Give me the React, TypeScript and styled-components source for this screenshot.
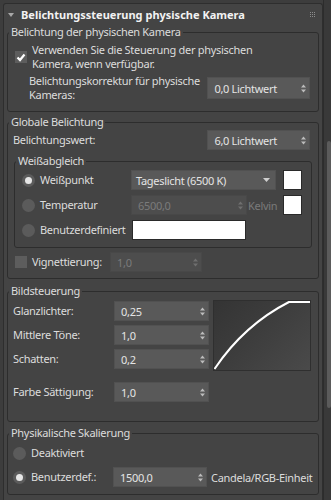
import React from "react";
import styled, { createGlobalStyle } from "styled-components";

const GlobalStyle = createGlobalStyle`
  html, body {
    margin: 0;
    padding: 0;
    background: #3d3d3d;
  }
  body {
    font-family: "Noto Sans", "Open Sans", sans-serif;
    font-size: 11px;
    letter-spacing: -0.3px;
    color: #dcdcdc;
  }
`;

const Window = styled.div`
  display: flex;
  width: 331px;
  height: 500px;
  overflow: hidden;
  background: #3d3d3d;
`;

const Panel = styled.div`
  box-sizing: border-box;
  flex: 0 0 319px;
  height: 497px;
  margin: 3px 0 0 3px;
  padding: 0 3px;
  display: flex;
  flex-direction: column;
  background: #444444;
  border: 1px solid #2e2e2e;
  border-bottom: none;
  border-radius: 3px 3px 0 0;
`;

const Header = styled.div`
  display: flex;
  align-items: center;
  height: 21px;
  padding-right: 4px;
`;

const Title = styled.div`
  flex: 1;
  font-weight: 700;
  letter-spacing: 0;
  color: #f2f2f2;
`;

const Scroll = styled.div`
  flex: 0 0 9px;
  height: 500px;
  background: #393939;
  border-left: 1px solid #2c2c2c;
  box-sizing: border-box;
`;

const Thumb = styled.div`
  width: 4px;
  margin-left: 3px;
  border-radius: 2px;
  background: #5b5b5b;
`;

const Group = styled.fieldset<{ $mt?: number; $inner?: boolean }>`
  margin: ${(p) => (p.$inner ? "4px -2px 0 1px" : `${p.$mt ?? 0}px 0 0 0`)};
  padding: 0;
  min-width: 0;
  border: 1px solid #2d2d2d;
  border-radius: 3px;
`;

const Legend = styled.legend`
  margin-left: 1px;
  padding: 0 2px;
  line-height: 14px;
  color: #dcdcdc;
`;

const Body = styled.div<{ $pad: string }>`
  display: flex;
  flex-direction: column;
  padding: ${(p) => p.$pad};
`;

const Row = styled.div<{ $h?: number; $mt?: number; $pl?: number }>`
  display: flex;
  align-items: center;
  height: ${(p) => (p.$h ? `${p.$h}px` : "auto")};
  margin-top: ${(p) => p.$mt ?? 0}px;
  padding-left: ${(p) => p.$pl ?? 0}px;
`;

const Label = styled.span<{ $w?: number; $lh?: number; $dim?: boolean }>`
  flex: ${(p) => (p.$w ? `0 0 ${p.$w}px` : "1")};
  line-height: ${(p) => p.$lh ?? 14}px;
  color: ${(p) => (p.$dim ? "#7a7a7a" : "#dcdcdc")};
  white-space: nowrap;
`;

const Field = styled.div<{ $w: number; $h?: number; $off?: boolean; $pl?: number }>`
  box-sizing: border-box;
  flex: 0 0 ${(p) => p.$w}px;
  height: ${(p) => p.$h ?? 20}px;
  display: flex;
  align-items: center;
  justify-content: space-between;
  padding: 0 3px 0 ${(p) => p.$pl ?? 6}px;
  background: ${(p) => (p.$off ? "#4d4d4d" : "#595959")};
  color: ${(p) => (p.$off ? "#7b7b7b" : "#e4e4e4")};
  border: 1px solid ${(p) => (p.$off ? "#484848" : "#515151")};
`;

const CheckBox = styled.span`
  flex: 0 0 12px;
  height: 12px;
  display: flex;
  align-items: center;
  justify-content: center;
  background: #5d5d5d;
  margin-right: 5px;
`;

const Radio = styled.span<{ $on?: boolean }>`
  flex: 0 0 13px;
  height: 13px;
  margin-right: 5px;
  border-radius: 50%;
  background: #5b5b5b;
  display: flex;
  align-items: center;
  justify-content: center;

  &::after {
    content: "";
    display: ${(p) => (p.$on ? "block" : "none")};
    width: 7px;
    height: 7px;
    border-radius: 50%;
    background: #e6e6e6;
  }
`;

const Swatch = styled.span`
  box-sizing: border-box;
  flex: 0 0 19px;
  height: 20px;
  margin-left: auto;
  background: #ffffff;
  border: 1px solid #2a2a2a;
`;

const ColorBox = styled.span`
  box-sizing: border-box;
  flex: 0 0 114px;
  height: 20px;
  margin-left: 1px;
  background: #ffffff;
  border: 1px solid #2a2a2a;
`;

const Unit = styled.span<{ $dim?: boolean }>`
  margin-left: ${(p) => (p.$dim ? 1 : 4)}px;
  color: ${(p) => (p.$dim ? "#7a7a7a" : "#dcdcdc")};
  white-space: nowrap;
`;

const Split = styled.div`
  display: flex;
  align-items: flex-start;
  margin-top: 1px;
`;

const Stack = styled.div`
  flex: 1;
  display: flex;
  flex-direction: column;
  gap: 4px;
  margin-top: 1px;
`;

const Curve = styled.div`
  box-sizing: border-box;
  flex: 0 0 98px;
  height: 71px;
  margin-left: 4px;
  border: 1px solid #2f2f2f;
  background: linear-gradient(135deg, #343434 0%, #3d3d3d 45%, #4a4a4a 100%);
`;

const Arrows = ({ off }: { off?: boolean }) => (
  <svg width="5" height="9" viewBox="0 0 5 9">
    <path d="M0 3.5L2.5 0.5L5 3.5Z M0 5.5L2.5 8.5L5 5.5Z" fill={off ? "#6f6f6f" : "#bcbcbc"} />
  </svg>
);

const Spinner = ({ value, w, h, off }: { value: string; w: number; h?: number; off?: boolean }) => (
  <Field $w={w} $h={h} $off={off}>
    <span>{value}</span>
    <Arrows off={off} />
  </Field>
);

const Check = ({ checked }: { checked?: boolean }) => (
  <CheckBox>
    {checked && (
      <svg width="10" height="9" viewBox="0 0 10 9">
        <path d="M1.5 4.5L4 7L8.5 1.5" stroke="#ffffff" strokeWidth="2.2" fill="none" />
      </svg>
    )}
  </CheckBox>
);

export default function App() {
  return (
    <>
      <GlobalStyle />
      <Window>
        <Panel>
          <Header>
            <svg width="6" height="4" viewBox="0 0 6 4" style={{ margin: "0 7px 0 1px" }}>
              <path d="M0 0H6L3 4Z" fill="#a8a8a8" />
            </svg>
            <Title>Belichtungssteuerung physische Kamera</Title>
            <svg width="5" height="5" viewBox="0 0 5 5">
              {[0, 2, 4].map((x) =>
                [0, 2, 4].map((y) => <rect key={`${x}-${y}`} x={x} y={y} width="1" height="1" fill="#8c8c8c" />)
              )}
            </svg>
          </Header>

          <Group>
            <Legend>Belichtung der physischen Kamera</Legend>
            <Body $pad="4px 8px 9px 5px">
              <Row $pl={2}>
                <Check checked />
                <Label $lh={14}>
                  Verwenden Sie die Steuerung der physischen
                  <br />
                  Kamera, wenn verfügbar.
                </Label>
              </Row>
              <Row $mt={3} $pl={16}>
                <Label $lh={14}>
                  Belichtungskorrektur für physische
                  <br />
                  Kameras:
                </Label>
                <Spinner value="0,0 Lichtwert" w={103} h={22} />
              </Row>
            </Body>
          </Group>

          <Group $mt={3}>
            <Legend>Globale Belichtung</Legend>
            <Body $pad="1px 8px 6px 5px">
              <Row $h={20}>
                <Label>Belichtungswert:</Label>
                <Spinner value="6,0 Lichtwert" w={103} />
              </Row>
              <Group $inner>
                <Legend>Weißabgleich</Legend>
                <Body $pad="2px 9px 7px 7px" style={{ gap: 5 }}>
                  <Row $h={20}>
                    <Radio $on />
                    <Label $w={91}>Weißpunkt</Label>
                    <Field $w={145} $pl={4} style={{ paddingRight: 5 }}>
                      <span>Tageslicht (6500 K)</span>
                      <svg width="7" height="4" viewBox="0 0 7 4">
                        <path d="M0 0H7L3.5 4Z" fill="#cfcfcf" />
                      </svg>
                    </Field>
                    <Swatch />
                  </Row>
                  <Row $h={20}>
                    <Radio />
                    <Label $w={91}>Temperatur</Label>
                    <Spinner value="6500,0" w={116} off />
                    <Unit $dim>Kelvin</Unit>
                    <Swatch />
                  </Row>
                  <Row $h={20}>
                    <Radio />
                    <Label $w={91}>Benutzerdefiniert</Label>
                    <ColorBox />
                  </Row>
                </Body>
              </Group>
              <Row $h={20} $mt={4} $pl={2}>
                <Check />
                <Label $w={78}>Vignettierung:</Label>
                <Spinner value="1,0" w={92} off />
              </Row>
            </Body>
          </Group>

          <Group $mt={5}>
            <Legend>Bildsteuerung</Legend>
            <Body $pad="1px 7px 19px 5px">
              <Split>
                <Stack>
                  <Row $h={20}>
                    <Label $w={101}>Glanzlichter:</Label>
                    <Spinner value="0,25" w={95} />
                  </Row>
                  <Row $h={20}>
                    <Label $w={101}>Mittlere Töne:</Label>
                    <Spinner value="1,0" w={95} />
                  </Row>
                  <Row $h={20}>
                    <Label $w={101}>Schatten:</Label>
                    <Spinner value="0,2" w={95} />
                  </Row>
                </Stack>
                <Curve>
                  <svg width="96" height="69" viewBox="0 0 96 69">
                    <path d="M0.5 68 Q30 24 75 1 L96 1" stroke="#ffffff" strokeWidth="2" fill="none" />
                  </svg>
                </Curve>
              </Split>
              <Row $h={20} $mt={11}>
                <Label $w={101}>Farbe Sättigung:</Label>
                <Spinner value="1,0" w={95} />
              </Row>
            </Body>
          </Group>

          <Group $mt={4}>
            <Legend>Physikalische Skalierung</Legend>
            <Body $pad="3px 6px 7px 5px" style={{ gap: 4 }}>
              <Row $h={20}>
                <Radio />
                <Label>Deaktiviert</Label>
              </Row>
              <Row $h={20}>
                <Radio $on />
                <Label $w={82}>Benutzerdef.:</Label>
                <Spinner value="1500,0" w={94} />
                <Unit>Candela/RGB-Einheit</Unit>
              </Row>
            </Body>
          </Group>
        </Panel>
        <Scroll>
          <Thumb style={{ marginTop: 141, height: 267 }} />
        </Scroll>
      </Window>
    </>
  );
}
